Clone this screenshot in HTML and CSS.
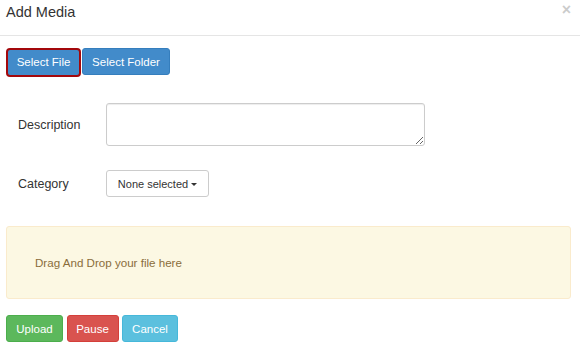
FILE: index.html
```html
<!DOCTYPE html>
<html>
<head>
<meta charset="utf-8">
<link rel="stylesheet" href="styles.css">
</head>
<body>
<div class="modal">
  <div class="modal-header">
    <h4 class="modal-title">Add Media</h4>
    <button class="close" type="button">×</button>
  </div>
  <div class="modal-body">
    <div class="btn-group">
      <button class="btn btn-primary btn-focus" type="button">Select File</button>
      <button class="btn btn-primary" type="button">Select Folder</button>
    </div>
    <form class="form">
      <div class="form-row form-row-desc">
        <label class="form-label">Description</label>
        <textarea class="form-textarea"></textarea>
      </div>
      <div class="form-row form-row-cat">
        <label class="form-label">Category</label>
        <button class="dropdown" type="button">None selected <span class="caret"></span></button>
      </div>
    </form>
    <div class="dropzone">Drag And Drop your file here</div>
    <div class="actions">
      <button class="btn btn-sm btn-success" type="button">Upload</button>
      <button class="btn btn-sm btn-danger" type="button">Pause</button>
      <button class="btn btn-sm btn-info" type="button">Cancel</button>
    </div>
  </div>
</div>
</body>
</html>
```

FILE: styles.css
```css
* { box-sizing: border-box; }
html, body {
  margin: 0;
  padding: 0;
  background: #fff;
}
body {
  font-family: "Liberation Sans", Arial, sans-serif;
  font-size: 11.4px;
  color: #333;
  width: 580px;
  height: 353px;
  overflow: hidden;
}
.modal-header {
  height: 36px;
  border-bottom: 1px solid #e5e5e5;
  display: flex;
  justify-content: space-between;
  align-items: flex-start;
  padding: 4px 9px 0 6px;
}
.modal-title {
  margin: 0;
  font-size: 14.5px;
  line-height: 17px;
  font-weight: normal;
  color: #333;
}
.close {
  border: 0;
  background: transparent;
  padding: 0;
  margin: 0;
  font-family: "Liberation Sans", Arial, sans-serif;
  font-size: 16px;
  line-height: 12px;
  font-weight: bold;
  color: #000;
  opacity: 0.2;
  cursor: pointer;
}
.modal-body {
  padding: 12px 9px 0 6px;
}
.btn-group {
  display: flex;
  height: 28px;
}
.btn {
  font-family: "Liberation Sans", Arial, sans-serif;
  font-size: 11.5px;
  border: 1px solid transparent;
  border-radius: 3px;
  color: #fff;
  padding: 0;
  margin: 0;
  cursor: pointer;
}
.btn-primary {
  background: #428bca;
  border-color: #357ebd;
}
.btn-group .btn {
  height: 27px;
}
.btn-group .btn-focus {
  width: 75px;
  height: 29px;
  margin-top: -0.5px;
  border: 2px solid #a3080c;
  border-radius: 4px;
}
.btn-group .btn + .btn {
  margin-left: 1px;
  width: 88px;
}
.form {
  padding: 27px 0 0 12px;
}
.form-row {
  display: flex;
  align-items: center;
}
.form-row-cat {
  margin-top: 24px;
}
.form-label {
  width: 88px;
  font-size: 12.5px;
  color: #333;
}
.form-textarea {
  width: 319px;
  height: 43px;
  border: 1px solid #ccc;
  border-radius: 3px;
  box-shadow: inset 0 1px 1px rgba(0, 0, 0, 0.075);
  margin: 0;
  padding: 4px 8px;
  font-family: "Liberation Sans", Arial, sans-serif;
  font-size: 11.4px;
}
.dropdown {
  height: 27px;
  width: 103px;
  border: 1px solid #ccc;
  border-radius: 3px;
  background: #fff;
  color: #333;
  font-family: "Liberation Sans", Arial, sans-serif;
  font-size: 11px;
  padding: 0;
  margin: 0;
  display: flex;
  align-items: center;
  justify-content: center;
  gap: 3px;
}
.caret {
  display: inline-block;
  width: 0;
  height: 0;
  border-left: 3px solid transparent;
  border-right: 3px solid transparent;
  border-top: 3px solid #333;
  margin-top: 1px;
}
.dropzone {
  margin-top: 29px;
  height: 73px;
  background: #fcf8e3;
  border: 1px solid #faebcc;
  border-radius: 3px;
  color: #8a6d3b;
  display: flex;
  align-items: center;
  padding-left: 28px;
  font-size: 11.6px;
}
.actions {
  margin-top: 16px;
  display: flex;
  gap: 3.5px;
}
.btn-sm {
  height: 27px;
}
.btn-success {
  width: 57px;
  background: #5cb85c;
  border-color: #4cae4c;
}
.btn-danger {
  width: 52px;
  background: #d9534f;
  border-color: #d43f3a;
}
.btn-info {
  width: 56px;
  background: #5bc0de;
  border-color: #46b8da;
}
```
